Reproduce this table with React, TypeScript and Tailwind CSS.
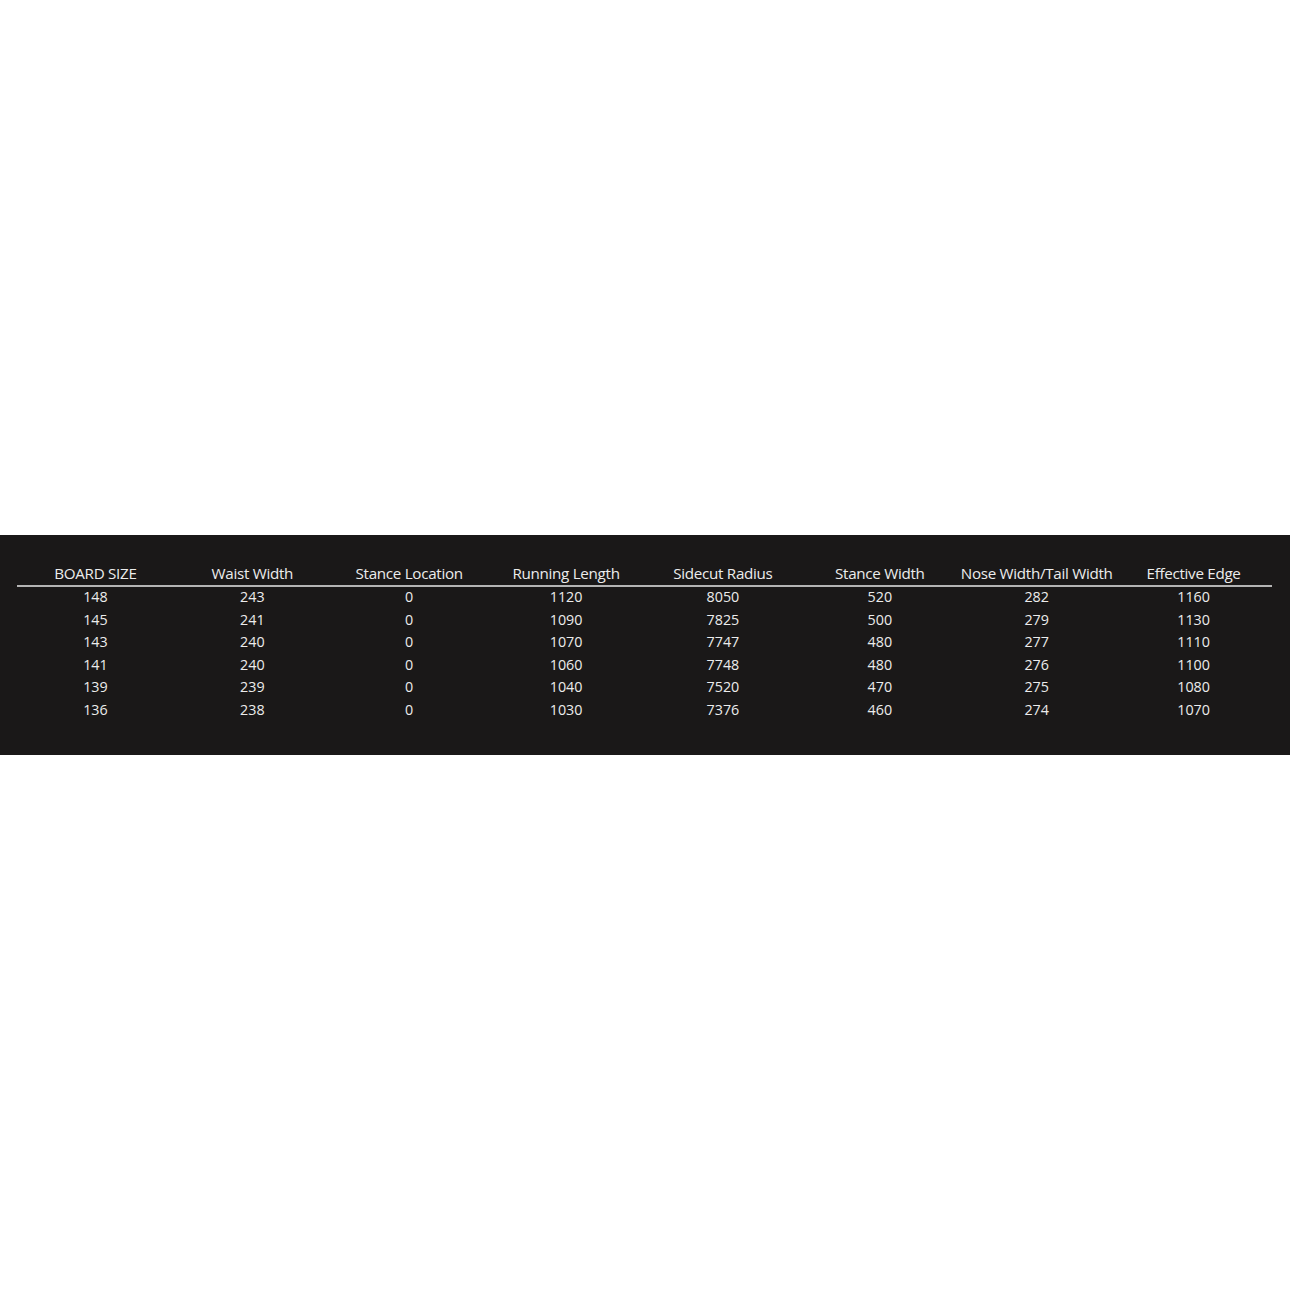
const headers = [
  'BOARD SIZE',
  'Waist Width',
  'Stance Location',
  'Running Length',
  'Sidecut Radius',
  'Stance Width',
  'Nose Width/Tail Width',
  'Effective Edge',
];

const rows = [
  ['148', '243', '0', '1120', '8050', '520', '282', '1160'],
  ['145', '241', '0', '1090', '7825', '500', '279', '1130'],
  ['143', '240', '0', '1070', '7747', '480', '277', '1110'],
  ['141', '240', '0', '1060', '7748', '480', '276', '1100'],
  ['139', '239', '0', '1040', '7520', '470', '275', '1080'],
  ['136', '238', '0', '1030', '7376', '460', '274', '1070'],
];

export default function App() {
  return (
    <div className="min-h-[1290px] bg-white pt-[535px]" style={{ fontFamily: '"Open Sans", "Noto Sans", sans-serif' }}>
      <div className="h-[220px] bg-[#1a1818] pt-[26px] pl-[17px] pr-[18px]">
        <table className="w-full table-fixed border-collapse text-[#ececec]">
          <thead>
            <tr className="border-b-2 border-[#b4b4b4]">
              {headers.map((h) => (
                <th key={h} className="h-[24px] whitespace-nowrap p-0 text-center text-[15.2px] font-medium leading-[24px] tracking-[-0.3px]">
                  {h}
                </th>
              ))}
            </tr>
          </thead>
          <tbody>
            {rows.map((r) => (
              <tr key={r[0]}>
                {r.map((c, i) => (
                  <td key={i} className="h-[22.6px] p-0 pb-[2px] text-center text-[14.3px] font-medium leading-[20.6px]">
                    {c}
                  </td>
                ))}
              </tr>
            ))}
          </tbody>
        </table>
      </div>
    </div>
  );
}
